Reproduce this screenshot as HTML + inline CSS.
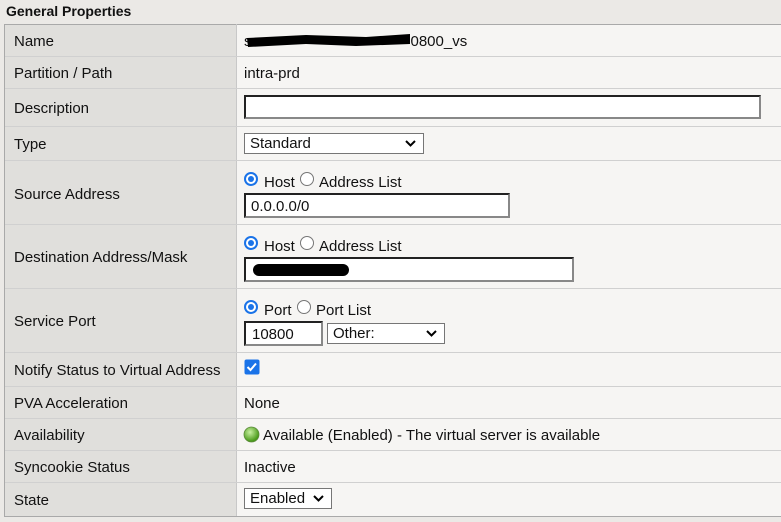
<!DOCTYPE html>
<html><head><meta charset="utf-8"><style>
*{box-sizing:border-box;margin:0;padding:0}
body{width:781px;height:522px;background:#ebe9e6;font-family:"Liberation Sans",Arial,sans-serif;font-size:15px;color:#111;position:relative;overflow:hidden}
.h{position:absolute;left:6px;top:3px;font-weight:bold;font-size:14px}
.tbl{position:absolute;left:4px;top:24px;width:778px;height:493px;border:1px solid #a9a9a9;border-right:none;background:#f6f5f3}
.lab{position:absolute;left:5px;width:231px;background:#e0dfdc}
.div{position:absolute;left:236px;top:24px;width:1px;height:492px;background:#c8c8c8}
.hl{position:absolute;left:5px;width:776px;height:1px;background:#d0d0d0}
.t{position:absolute;white-space:nowrap;line-height:16px;margin-top:2px}
.inp{position:absolute;background:#fff;border:2px solid #333;border-right-color:#888;border-bottom-color:#888;border-top-color:#222;border-left-color:#222}
.sel{position:absolute;background:#fff;border:1px solid #767676;padding-left:5px;line-height:20px}
.sel svg{position:absolute;right:7px;top:6px}
.rad{position:absolute;width:14px;height:14px;border-radius:50%}
.on{border:2px solid #1a73e8;background:#fff}
.on::after{content:"";position:absolute;left:2px;top:2px;width:6px;height:6px;border-radius:50%;background:#1a73e8}
.off{border:1px solid #767676;background:#fff}
</style></head><body>
<div class="h">General Properties</div>
<div class="tbl"></div>
<div class="lab" style="top:25px;height:491px"></div>
<div class="div"></div>
<div class="hl" style="top:56px"></div>
<div class="hl" style="top:88px"></div>
<div class="hl" style="top:126px"></div>
<div class="hl" style="top:160px"></div>
<div class="hl" style="top:224px"></div>
<div class="hl" style="top:288px"></div>
<div class="hl" style="top:352px"></div>
<div class="hl" style="top:386px"></div>
<div class="hl" style="top:418px"></div>
<div class="hl" style="top:450px"></div>
<div class="hl" style="top:482px"></div>

<div class="t" style="left:14px;top:32px">Name</div>
<div class="t" style="left:14px;top:64px">Partition / Path</div>
<div class="t" style="left:14px;top:99px">Description</div>
<div class="t" style="left:14px;top:135px">Type</div>
<div class="t" style="left:14px;top:185px">Source Address</div>
<div class="t" style="left:14px;top:248px">Destination Address/Mask</div>
<div class="t" style="left:14px;top:312px">Service Port</div>
<div class="t" style="left:14px;top:361px">Notify Status to Virtual Address</div>
<div class="t" style="left:14px;top:394px">PVA Acceleration</div>
<div class="t" style="left:14px;top:426px">Availability</div>
<div class="t" style="left:14px;top:458px">Syncookie Status</div>
<div class="t" style="left:14px;top:491px">State</div>

<div class="t" style="left:244px;top:32px">s<span style="display:inline-block;width:159px"></span>0800_vs</div>
<svg style="position:absolute;left:246px;top:33px" width="165" height="16"><path d="M1 5 L60 2 L120 4 L164 1 L164 11 L110 13 L60 11 L2 14 Z" fill="#000"/></svg>
<div class="t" style="left:244px;top:64px">intra-prd</div>
<div class="inp" style="left:244px;top:95px;width:517px;height:24px"></div>
<div class="sel" style="left:244px;top:133px;width:180px;height:21px">Standard<svg width="11" height="7"><path d="M1 1 L5.5 5.5 L10 1" stroke="#000" stroke-width="2" fill="none"/></svg></div>

<div class="rad on" style="left:244px;top:172px"></div><div class="t" style="left:264px;top:173px">Host</div>
<div class="rad off" style="left:300px;top:172px"></div><div class="t" style="left:319px;top:173px">Address List</div>
<div class="inp" style="left:244px;top:193px;width:266px;height:25px"></div><div class="t" style="left:251px;top:197px">0.0.0.0/0</div>

<div class="rad on" style="left:244px;top:236px"></div><div class="t" style="left:264px;top:237px">Host</div>
<div class="rad off" style="left:300px;top:236px"></div><div class="t" style="left:319px;top:237px">Address List</div>
<div class="inp" style="left:244px;top:257px;width:330px;height:25px"></div>
<svg style="position:absolute;left:252px;top:262px" width="98" height="16"><rect x="1" y="2" width="96" height="12" rx="6" fill="#000"/></svg>

<div class="rad on" style="left:244px;top:300px"></div><div class="t" style="left:264px;top:301px">Port</div>
<div class="rad off" style="left:297px;top:300px"></div><div class="t" style="left:316px;top:301px">Port List</div>
<div class="inp" style="left:244px;top:321px;width:79px;height:25px"></div><div class="t" style="left:252px;top:325px">10800</div>
<div class="sel" style="left:327px;top:323px;width:118px;height:21px">Other:<svg width="11" height="7"><path d="M1 1 L5.5 5.5 L10 1" stroke="#000" stroke-width="2" fill="none"/></svg></div>

<svg style="position:absolute;left:244px;top:359px" width="16" height="16"><rect x="0.5" y="0.5" width="15" height="15" rx="2" fill="#1a73e8"/><path d="M3.5 8 L6.5 11 L12 4.5" stroke="#fff" stroke-width="2" fill="none"/></svg>
<div class="t" style="left:244px;top:394px">None</div>
<svg style="position:absolute;left:243px;top:426px" width="17" height="17"><defs><radialGradient id="g" cx="40%" cy="35%" r="60%"><stop offset="0" stop-color="#c8f0a0"/><stop offset="1" stop-color="#4a9a1a"/></radialGradient></defs><circle cx="8.5" cy="8.5" r="7.5" fill="url(#g)" stroke="#5a8a3a" stroke-width="0.8"/></svg>
<div class="t" style="left:263px;top:426px">Available (Enabled) - The virtual server is available</div>
<div class="t" style="left:244px;top:458px">Inactive</div>
<div class="sel" style="left:244px;top:488px;width:88px;height:21px">Enabled<svg width="11" height="7"><path d="M1 1 L5.5 5.5 L10 1" stroke="#000" stroke-width="2" fill="none"/></svg></div>
</body></html>
